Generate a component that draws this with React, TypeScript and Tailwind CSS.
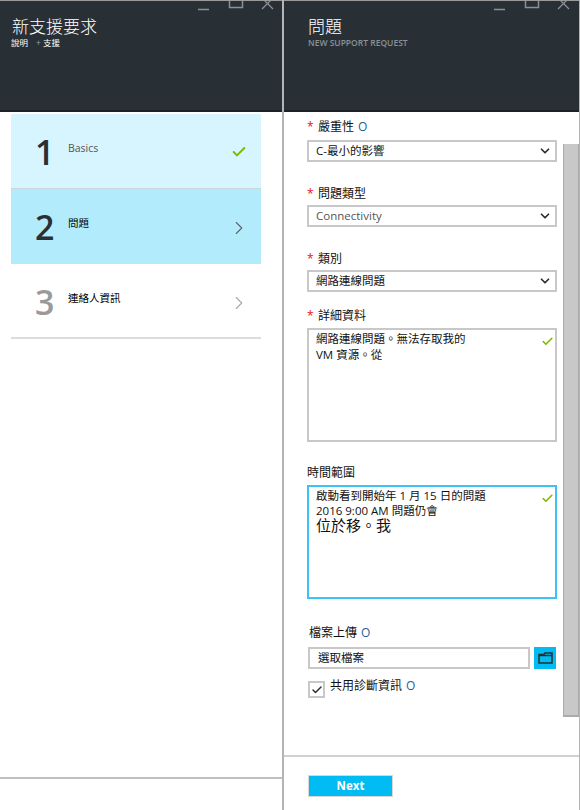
import { Check, ChevronDown, ChevronRight } from 'lucide-react';

const fontStack = "font-['Open_Sans','Noto_Sans_CJK_TC',sans-serif]";

// Window buttons, cut off by the top of the page like in the portal
function WindowControls() {
  return (
    <svg width="80" height="10" viewBox="0 0 80 10" fill="none" stroke="#8a9096" strokeWidth="1.5">
      <path d="M1 8.5H12" />
      <path d="M32.5 -6H45.5V6.5H32.5Z" />
      <path d="M65 -3L76 8M76 -3L65 8" strokeWidth="1.3" />
    </svg>
  );
}

function BladeHeader({ title, children, controlsClass, padClass }: { title: string; children: React.ReactNode; controlsClass: string; padClass: string }) {
  return (
    <header className={`relative h-[112px] shrink-0 border-t border-t-[#9a9a9a] border-b-2 border-b-[#1d2125] bg-[#293035] pt-[15px] ${padClass}`}>
      <div className={controlsClass}>
        <WindowControls />
      </div>
      <h1 className="text-[17px] font-light leading-[22px] text-white">{title}</h1>
      {children}
    </header>
  );
}

function Step({ num, label, labelClass, numClass, rowClass, iconClass, icon }: { num: number; label: string; labelClass: string; numClass: string; rowClass: string; iconClass: string; icon: React.ReactNode }) {
  return (
    <div className={`flex h-[75px] items-start ${rowClass}`}>
      <span className={`w-[57px] pl-[24px] pt-[13px] text-[34px] font-semibold leading-[50px] ${numClass}`}>{num}</span>
      <span className={`flex-1 pt-[25px] text-[10.5px] leading-[18px] ${labelClass}`}>{label}</span>
      <span className={iconClass}>{icon}</span>
    </div>
  );
}

function FieldLabel({ text, required = true, info = false }: { text: string; required?: boolean; info?: boolean }) {
  return (
    <div className="flex items-center text-[12px] leading-[16px] text-[#111]">
      {required && <span className="w-[11px] text-[#e81123]">*</span>}
      <span>{text}</span>
      {info && <span className="ml-1 text-[#1f5f8f]">O</span>}
    </div>
  );
}

function SelectBox({ value, muted = false }: { value: string; muted?: boolean }) {
  return (
    <div className="flex h-[22px] items-center justify-between border-2 border-[#c8c8c8] pl-[7px] pr-[3px]">
      <span className={`text-[11.5px] ${muted ? 'text-[#555]' : 'text-[#111]'}`}>{value}</span>
      <ChevronDown size={14} strokeWidth={3} className="text-[#293035]" />
    </div>
  );
}

function TextBox({ lines, focused = false, extra }: { lines: string[]; focused?: boolean; extra?: string }) {
  return (
    <div className={`flex h-[114px] justify-between border-2 pl-[7px] pr-[1px] pt-[1px] ${focused ? 'border-[#3cc3f5]' : 'border-[#c8c8c8]'}`}>
      <div className={`text-[11.5px] text-[#111] ${focused ? 'leading-[15px]' : 'leading-[16px]'}`}>
        {lines.map((l) => (
          <div key={l}>{l}</div>
        ))}
        {extra && <div className="text-[15px] leading-[15px]">{extra}</div>}
      </div>
      <Check size={13} strokeWidth={3} className="mt-[4px] text-[#7fba00]" />
    </div>
  );
}

export default function App() {
  return (
    <div className={`flex h-[810px] w-[580px] overflow-hidden bg-white ${fontStack}`}>
      {/* Left blade */}
      <section className="flex w-[284px] shrink-0 flex-col border-r-2 border-r-[#b4b4b4]">
        <BladeHeader title="新支援要求" controlsClass="absolute right-[5px] top-0" padClass="pl-[12px]">
          <div className="-ml-px flex items-center text-[8.5px] leading-[10px] text-white">
            <span>說明</span>
            <span className="ml-[8px] text-[#9aa0a6]">+</span>
            <span className="ml-[2px]">支援</span>
          </div>
        </BladeHeader>
        <div className="flex-1 pl-[11px] pr-[21px] pt-[2px]">
          <Step
            num={1}
            label="Basics"
            numClass="text-[#293035]"
            labelClass="text-[#555]"
            rowClass="bg-[#d7f5ff] border-b border-b-[#c8d8dd]"
            iconClass="pr-[14px] pt-[30px]"
            icon={<Check size={16} strokeWidth={3} className="text-[#7fba00]" />}
          />
          <Step
            num={2}
            label="問題"
            numClass="text-[#293035]"
            labelClass="text-black"
            rowClass="bg-[#b2ebfb] border-b border-b-[#dcdcdc]"
            iconClass="pr-[11px] pt-[28px]"
            icon={<ChevronRight size={22} strokeWidth={1.2} className="text-[#5c6670]" />}
          />
          <Step
            num={3}
            label="連絡人資訊"
            numClass="text-[#9a9a9a]"
            labelClass="text-black"
            rowClass="bg-white border-b-2 border-b-[#dcdcdc]"
            iconClass="pr-[11px] pt-[28px]"
            icon={<ChevronRight size={22} strokeWidth={1.2} className="text-[#a8a8a8]" />}
          />
        </div>
        <div className="h-[33px] border-t-2 border-t-[#c0c0c0]" />
      </section>

      {/* Right blade */}
      <section className="flex flex-1 flex-col border-r border-r-[#b4b4b4]">
        <BladeHeader title="問題" controlsClass="absolute right-[6px] top-0" padClass="pl-[24px]">
          <div className="text-[8.5px] font-semibold leading-[10px] text-[#8a9096]">NEW SUPPORT REQUEST</div>
        </BladeHeader>
        <div className="flex flex-1">
          <div className="flex-1 pl-[23px] pr-[6px] pt-[7px]">
            <FieldLabel text="嚴重性" info />
            <div className="mt-[5px]">
              <SelectBox value="C-最小的影響" />
            </div>
            <div className="mt-[24px]">
              <FieldLabel text="問題類型" />
            </div>
            <div className="mt-[3px]">
              <SelectBox value="Connectivity" muted />
            </div>
            <div className="mt-[24px]">
              <FieldLabel text="類別" />
            </div>
            <div className="mt-[3px]">
              <SelectBox value="網路連線問題" />
            </div>
            <div className="mt-[16px]">
              <FieldLabel text="詳細資料" />
            </div>
            <div className="mt-[4px]">
              <TextBox lines={['網路連線問題。無法存取我的', 'VM 資源。從']} />
            </div>
            <div className="mt-[23px]">
              <FieldLabel text="時間範圍" required={false} />
            </div>
            <div className="mt-[4px]">
              <TextBox focused lines={['啟動看到開始年 1 月 15 日的問題', '2016 9:00 AM 問題仍會']} extra="位於移。我" />
            </div>
            <div className="ml-[2px] mt-[26px]">
              <FieldLabel text="檔案上傳" required={false} info />
            </div>
            <div className="mx-px mt-[6px] flex gap-[4px]">
              <div className="flex h-[22px] flex-1 items-center border-2 border-[#c8c8c8] pl-[8px] text-[11.5px] text-[#111]">選取檔案</div>
              <div className="flex h-[22px] w-[22px] items-center justify-center bg-[#00bcf2]">
                <svg width="15" height="12" viewBox="0 0 15 12" fill="none" stroke="#293035" strokeWidth="1.5">
                  <path d="M1 2.5H6L7 1H14V11H1Z" />
                  <path d="M1 3.5H14" />
                </svg>
              </div>
            </div>
            <div className="ml-[1px] mt-[12px] flex items-start gap-[5px]">
              <div className="flex h-[17px] w-[17px] items-center justify-center border-2 border-[#c8c8c8]">
                <Check size={12} strokeWidth={3} className="text-[#293035]" />
              </div>
              <div className="-mt-[3px]">
                <FieldLabel text="共用診斷資訊" required={false} info />
              </div>
            </div>
          </div>
          <div className="mb-[38px] mt-[32px] w-[16px] border-x border-b-2 border-x-[#aaa] border-b-[#aaa] bg-[#c8c8c8]" />
        </div>
        <footer className="h-[55px] border-t-2 border-t-[#d0d0d0] pl-[24px] pt-[18px]">
          <button className="block h-[22px] w-[85px] border border-[#d8d8d8] bg-[#00bcf2] text-[11.5px] font-bold text-white">Next</button>
        </footer>
      </section>
    </div>
  );
}
